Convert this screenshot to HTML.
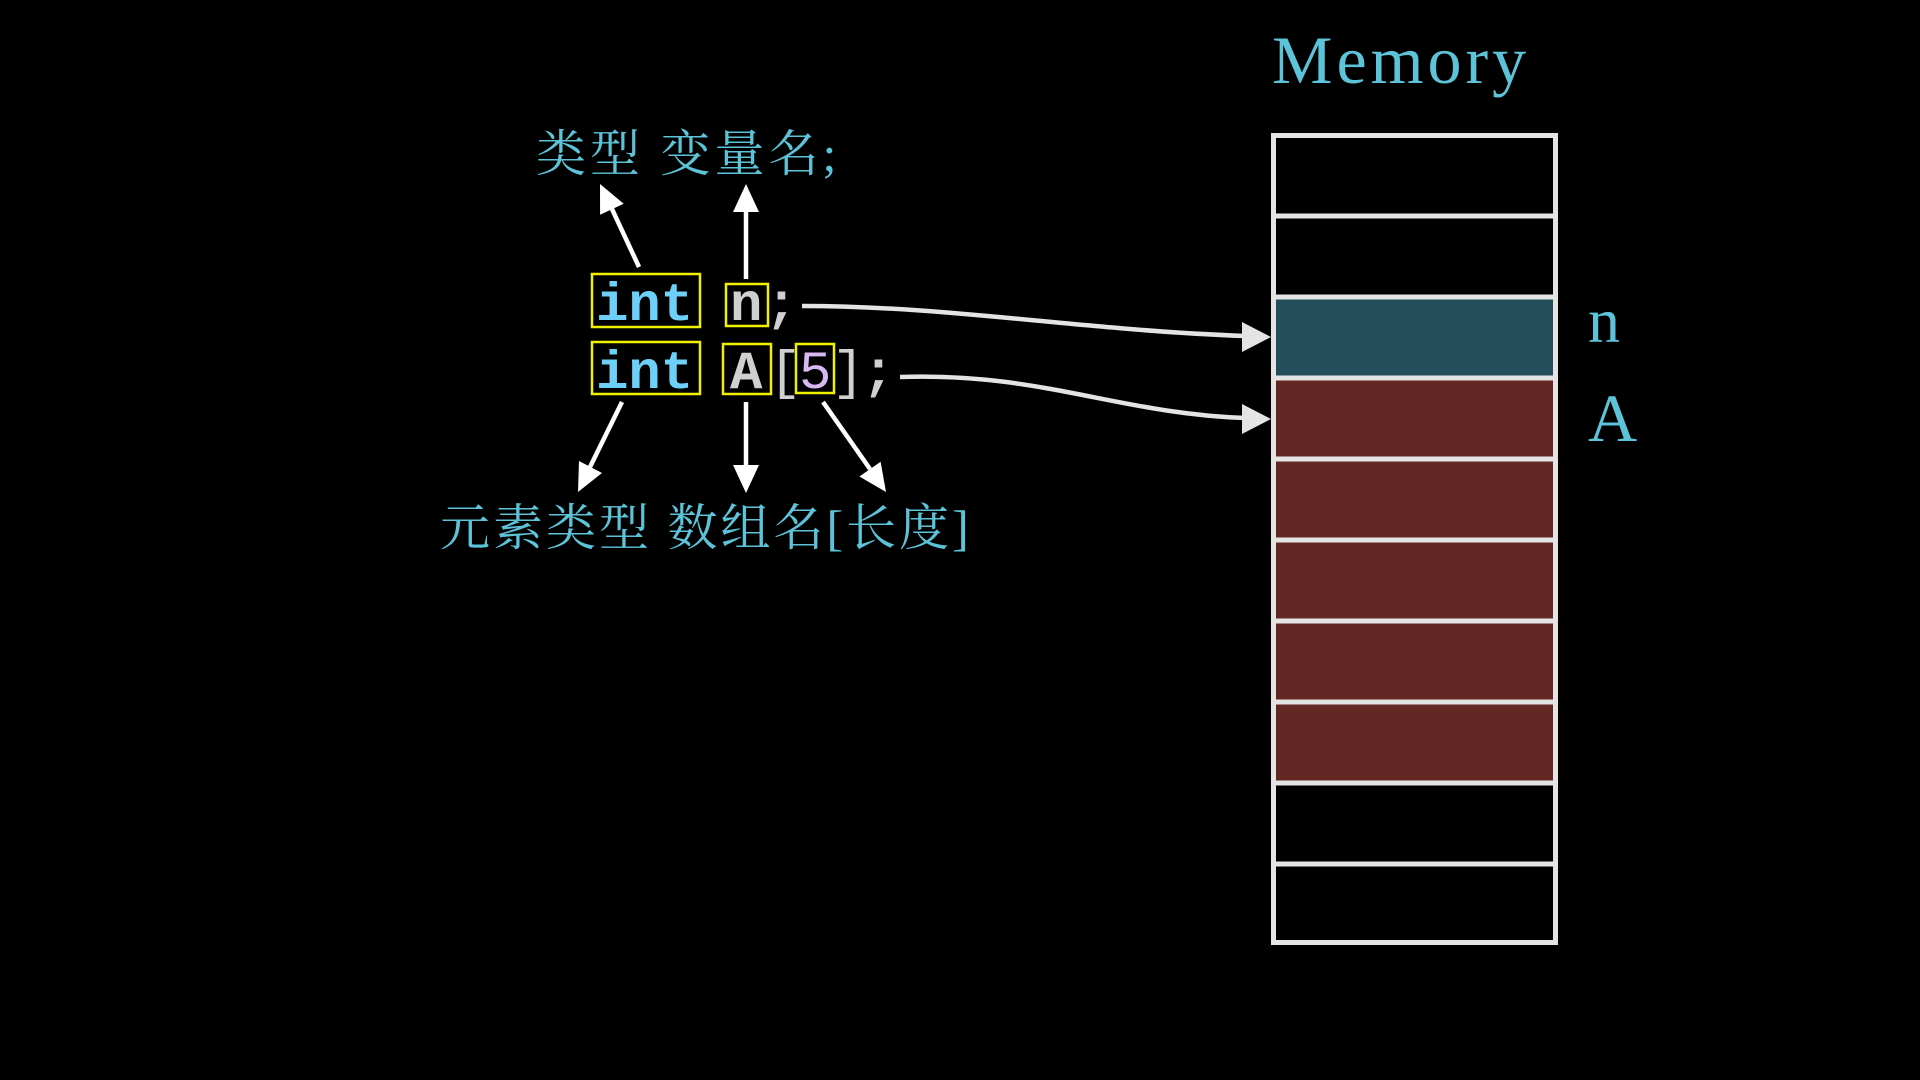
<!DOCTYPE html>
<html><head><meta charset="utf-8"><style>
html,body{margin:0;padding:0;background:#000;width:1920px;height:1080px;overflow:hidden}
</style></head><body>
<svg width="1920" height="1080" viewBox="0 0 1920 1080" xmlns="http://www.w3.org/2000/svg">
<rect width="1920" height="1080" fill="#000"/>
<!-- Memory -->
<text x="1272" y="83" font-family="Liberation Serif, serif" font-size="68" fill="#5cc3d8" letter-spacing="4">Memory</text>
<rect x="1273.5" y="135.5" width="282" height="807" fill="#000" stroke="#e4e4e4" stroke-width="5"/>
<rect x="1276" y="298" width="277" height="79" fill="#234e5a"/>
<rect x="1276" y="379" width="277" height="403" fill="#632724"/>
<g stroke="#e4e4e4" stroke-width="5">
<line x1="1273" y1="216" x2="1556" y2="216"/>
<line x1="1273" y1="297" x2="1556" y2="297"/>
<line x1="1273" y1="378" x2="1556" y2="378"/>
<line x1="1273" y1="459" x2="1556" y2="459"/>
<line x1="1273" y1="540" x2="1556" y2="540"/>
<line x1="1273" y1="621" x2="1556" y2="621"/>
<line x1="1273" y1="702" x2="1556" y2="702"/>
<line x1="1273" y1="783" x2="1556" y2="783"/>
<line x1="1273" y1="864" x2="1556" y2="864"/>
</g>
<text x="1588" y="342" font-family="Liberation Serif, serif" font-size="64" fill="#5cc3d8">n</text>
<text x="1588" y="441" font-family="Liberation Serif, serif" font-size="68" fill="#5cc3d8">A</text>

<!-- labels -->
<text x="536" y="171" font-family="Liberation Serif, 'Noto Serif CJK SC', serif" font-size="50" fill="#5cc3d8" letter-spacing="4">类型 变量名;</text>
<text x="440" y="545" font-family="Liberation Serif, 'Noto Serif CJK SC', serif" font-size="50" fill="#5cc3d8" letter-spacing="3">元素类型 数组名[长度]</text>

<!-- code -->
<g font-family="Liberation Mono, monospace" font-weight="bold" font-size="54">
<text x="596" y="320" fill="#6cd0f8">int</text>
<text x="596" y="388" fill="#6cd0f8">int</text>
<text x="730" y="320" fill="#d0d0d0">n</text>
<text x="765" y="320" fill="#d0d0d0">;</text>
<text x="730" y="388" fill="#d0d0d0">A</text>
<text x="769" y="388" fill="#d0d0d0" font-weight="normal">[</text>
<text x="799" y="388" fill="#d7b8f0" font-weight="normal">5</text>
<text x="832" y="388" fill="#d0d0d0" font-weight="normal">]</text>
<text x="862" y="388" fill="#d0d0d0">;</text>
</g>
<g fill="none" stroke="#f0f000" stroke-width="2.5">
<rect x="592" y="274" width="108" height="53"/>
<rect x="592" y="342" width="108" height="52"/>
<rect x="726" y="284" width="42" height="42"/>
<rect x="723" y="344" width="48" height="50"/>
<rect x="796" y="344" width="38" height="49"/>
</g>

<!-- arrows -->
<g stroke="#fff" stroke-width="4.5" fill="none">
<line x1="639" y1="267" x2="612" y2="209"/>
<line x1="746" y1="279" x2="746" y2="210"/>
<line x1="622" y1="402" x2="590" y2="467"/>
<line x1="746" y1="402" x2="746" y2="467"/>
<line x1="823" y1="402" x2="870" y2="469"/>
</g>
<g fill="#fff">
<polygon points="600,184 623.7,203.8 600.1,214.8"/>
<polygon points="746,184 733,212 759,212"/>
<polygon points="578,492 602,473 579,461"/>
<polygon points="746,493 733,465 759,465"/>
<polygon points="886,492 880.6,461.7 859.4,476.5"/>
</g>
<g stroke="#e4e4e4" stroke-width="4.5" fill="none">
<path d="M802,306 C950,306 1080,330 1245,336"/>
<path d="M900,377 C1040,372 1120,414 1245,418"/>
</g>
<g fill="#e4e4e4">
<polygon points="1271,337 1242,322 1242,352"/>
<polygon points="1271,419 1242,404 1242,434"/>
</g>
</svg>
</body></html>
